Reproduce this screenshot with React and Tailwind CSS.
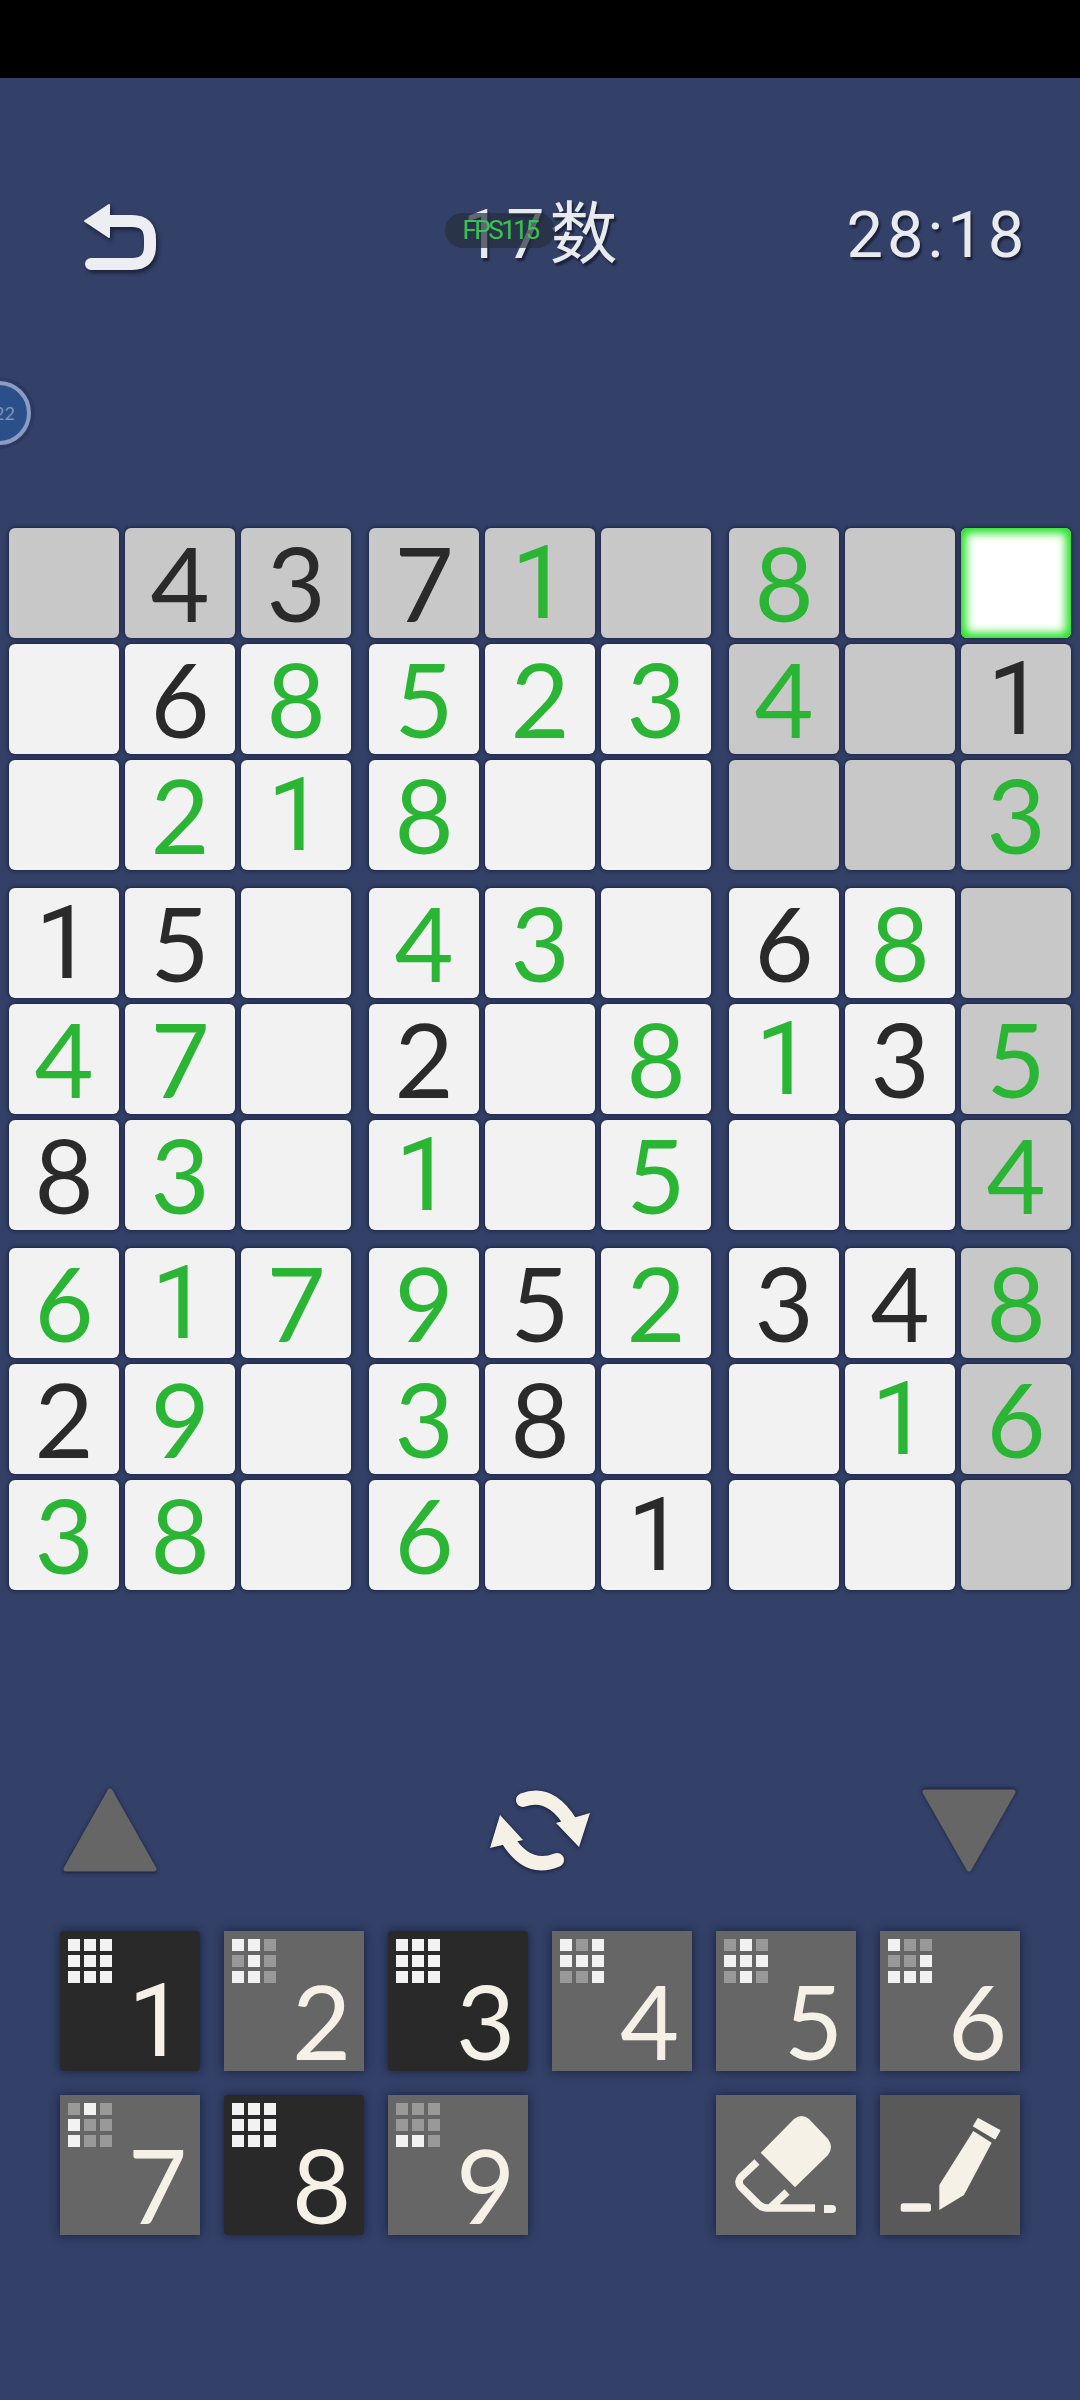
const puzzle = [
  ['', '4', '3', '7', '1g', '', '8g', '', ''],
  ['', '6', '8g', '5g', '2g', '3g', '4g', '', '1'],
  ['', '2g', '1g', '8g', '', '', '', '', '3g'],
  ['1', '5', '', '4g', '3g', '', '6', '8g', ''],
  ['4g', '7g', '', '2', '', '8g', '1g', '3', '5g'],
  ['8', '3g', '', '1g', '', '5g', '', '', '4g'],
  ['6g', '1g', '7g', '9g', '5', '2g', '3', '4', '8g'],
  ['2', '9g', '', '3g', '8', '', '', '1g', '6g'],
  ['3g', '8g', '', '6g', '', '1', '', '', ''],
];

// 1 = bright square, 0 = dim square
const pads = [
  { n: 1, dark: true, dots: '111111111' },
  { n: 2, dots: '110010110' },
  { n: 3, dark: true, dots: '111111111' },
  { n: 4, dots: '101111001' },
  { n: 5, dots: '010111010' },
  { n: 6, dots: '100001111' },
  { n: 7, dots: '010100100' },
  { n: 8, dark: true, dots: '111111111' },
  { n: 9, dots: '000000110' },
];

const Cell = ({ value, row, col }) => {
  const selected = row === 0 && col === 8;
  const shaded = row === 0 || col === 8 || (row < 3 && col > 5);
  const green = value.endsWith('g');
  const digit = value.replace('g', '');
  let bg = shaded ? 'bg-[#c8c8c8]' : 'bg-[#f2f2f2]';
  if (selected) bg = 'bg-white shadow-[inset_0_0_10px_5px_#1ee01e,0_0_4px_#10162c]';
  return (
    <div
      className={`flex h-[110px] w-[110px] items-center justify-center rounded-[6px] text-[102px] leading-none ${bg} ${selected ? '' : 'shadow-[0_0_4px_#10162c]'} ${green ? 'text-[#2ab534]' : 'text-[#2a2a2a]'} ${digit === '1' ? "font-['Roboto',sans-serif]" : ''}`}
    >
      {digit}
    </div>
  );
};

const Board = () => {
  const boxes = [0, 1, 2, 3, 4, 5, 6, 7, 8];
  return (
    <div className="grid grid-cols-3 gap-[18px] px-[9px]">
      {boxes.map((b) => (
        <div key={b} className="grid grid-cols-3 gap-[6px]">
          {[0, 1, 2, 3, 4, 5, 6, 7, 8].map((i) => {
            const row = Math.floor(b / 3) * 3 + Math.floor(i / 3);
            const col = (b % 3) * 3 + (i % 3);
            return <Cell key={i} value={puzzle[row][col]} row={row} col={col} />;
          })}
        </div>
      ))}
    </div>
  );
};

const PadButton = ({ n, dark, dots }) => (
  <div
    className={`relative flex h-[140px] w-[140px] items-end justify-end pr-[24px] text-[#f5f1e6] shadow-[0_0_9px_rgba(12,20,48,0.75)] ${dark ? 'rounded-[4px] bg-[#292929]' : 'bg-[#666666]'}`}
  >
    <div className="absolute left-[8px] top-[8px] grid grid-cols-3 gap-[4px]">
      {dots.split('').map((d, i) => (
        <div key={i} className={`h-[12px] w-[12px] ${d === '1' ? 'bg-[#f2f2f2]' : 'bg-[#999999]'}`} />
      ))}
    </div>
    <span className={`w-[48px] text-center text-[102px] leading-[100px] ${n === 1 ? "font-['Roboto',sans-serif]" : ''}`}>{n}</span>
  </div>
);

const Eraser = () => (
  <svg viewBox="0 0 140 140" className="h-[140px] w-[140px]" fill="#f5f1e6">
    <path d="M44.7 57.7 L78 24 Q85.5 18 93 24 L112 44 Q118 52 112 60 L79 92.3 Z" />
    <path
      d="M41 67 L25 82 Q21 87 25 92 L42 109 Q46 113 51 113 L99 113 M71 97 L54 113"
      fill="none"
      stroke="#f5f1e6"
      strokeWidth="7.5"
    />
    <path d="M108 110 H116 Q120 110 120 114 Q120 118 116 118 H108 Z" />
  </svg>
);

const Pencil = () => (
  <svg viewBox="0 0 140 140" className="h-[140px] w-[140px]" fill="#f5f1e6">
    <path d="M98.3 24 L119.3 35.7 L115 43.3 L94 31 Z" stroke="#f5f1e6" strokeWidth="2" strokeLinejoin="round" />
    <path d="M93.3 36 L111.7 47.7 L84 100 L59.3 115 L59.3 90 Z" />
    <rect x="20.7" y="108.3" width="30.3" height="8.4" rx="2.5" />
  </svg>
);

const App = () => {
  return (
    <div className="relative h-[2400px] w-[1080px] overflow-hidden bg-[#334067] font-['Lato',sans-serif]">
      <div className="h-[78px] bg-black" />

      {/* header */}
      <div className="flex h-[450px] items-start font-['Roboto','Noto_Sans_CJK_SC',sans-serif] text-[#e8eaee]">
        <svg viewBox="0 0 100 100" className="ml-[70px] mt-[112px] h-[100px] w-[100px] drop-shadow-[2px_3px_2px_rgba(15,20,40,0.7)]">
          <path d="M39 31 H62 Q80 31 80 49 V56 Q80 74 62 74 H21" fill="none" stroke="#eceef2" strokeWidth="12" strokeLinecap="round" />
          <path d="M15 31 L39 15 L39 47 Z" fill="#eceef2" stroke="#eceef2" strokeWidth="2" strokeLinejoin="round" />
        </svg>
        <div className="ml-[293px] mt-[117px] text-[68px] leading-[80px] tracking-[5px] [text-shadow:2px_3px_2px_rgba(15,20,40,0.7)]">
          17数
        </div>
        <div className="ml-[224px] mt-[117px] text-[65px] leading-[80px] tracking-[4px] [text-shadow:2px_3px_2px_rgba(15,20,40,0.7)]">
          28:18
        </div>
      </div>

      {/* fps overlay */}
      <div className="absolute left-[445px] top-[213px] flex h-[35px] w-[110px] items-center justify-center rounded-full bg-[#262d3f]/70 font-['Roboto',sans-serif] text-[26px] tracking-[-2.5px] text-[#37c44f]">
        FPS115
      </div>

      {/* floating bubble */}
      <div className="absolute left-[-37px] top-[377px] flex h-[72px] w-[72px] items-center justify-center rounded-full bg-[#2c3a63]">
        <div className="flex h-[64px] w-[64px] items-center justify-end rounded-full border-[4px] border-[#8a9cc0] bg-[#2b5089] pr-[12px] text-[18px] text-[#7f93b8]">
          22
        </div>
      </div>

      <Board />

      {/* rotate / scroll controls */}
      <div className="mt-[190px] flex h-[100px] items-center justify-between pl-[63px] pr-[64px]">
        <svg viewBox="0 0 94 84" className="h-[84px] w-[94px] drop-shadow-[0_1px_2px_rgba(10,15,40,0.8)]">
          <path d="M47 3 L91 81 H3 Z" fill="#666666" stroke="#666666" strokeWidth="5" strokeLinejoin="round" />
        </svg>
        <svg viewBox="0 0 120 100" className="h-[100px] w-[120px] drop-shadow-[0_1px_2px_rgba(10,15,40,0.8)]" fill="#f5f1e6">
          <path d="M43 20 Q70 10 90 42" fill="none" stroke="#f5f1e6" strokeWidth="14" strokeLinecap="round" />
          <path d="M110 33 L99 67 L76 43 Z" />
          <path d="M77 80 Q48 92 28 60" fill="none" stroke="#f5f1e6" strokeWidth="14" strokeLinecap="round" />
          <path d="M20 35 L43 60 L10 68 Z" />
        </svg>
        <svg viewBox="0 0 94 84" className="h-[84px] w-[94px] drop-shadow-[0_-1px_2px_rgba(10,15,40,0.8)]">
          <path d="M3 4 H91 L47 81 Z" fill="#666666" stroke="#666666" strokeWidth="5" strokeLinejoin="round" />
        </svg>
      </div>

      {/* number pad */}
      <div className="mt-[51px] grid grid-cols-6 gap-[24px] px-[60px]">
        {pads.map((p) => (
          <PadButton key={p.n} {...p} />
        ))}
        <div />
        <div className="h-[140px] w-[140px] bg-[#666666] shadow-[0_0_9px_rgba(12,20,48,0.75)]">
          <Eraser />
        </div>
        <div className="h-[140px] w-[140px] bg-[#595959] shadow-[0_0_9px_rgba(12,20,48,0.75)]">
          <Pencil />
        </div>
      </div>
    </div>
  );
};

export default App;
